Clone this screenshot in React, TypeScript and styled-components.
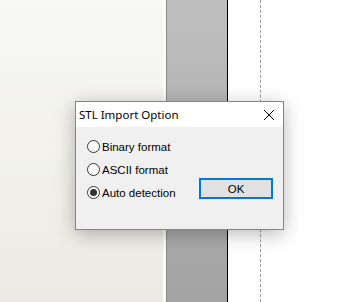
import React, { FC, useState } from "react";
import styled, { createGlobalStyle } from "styled-components";

const GlobalStyle = createGlobalStyle`
  html, body {
    margin: 0;
    padding: 0;
    overflow: hidden;
  }
  body {
    font-family: "Liberation Sans", Arial, sans-serif;
  }
`;

const options = ["Binary format", "ASCII format", "Auto detection"];

const App: FC = () => {
  const [selected, setSelected] = useState(2);

  return (
    <Screen>
      <GlobalStyle />
      <SidePanel />
      <Splitter />
      <GrayPanel />
      <Canvas>
        <GuideLine />
      </Canvas>

      <Dialog>
        <TitleBar>
          <Title>STL Import Option</Title>
          <CloseButton aria-label="Close">
            <svg width="12" height="12" viewBox="0 0 12 12">
              <path d="M1 1 L11 11 M11 1 L1 11" stroke="#000" strokeWidth="1" />
            </svg>
          </CloseButton>
        </TitleBar>
        <Body>
          <RadioList>
            {options.map((label, i) => (
              <RadioRow key={label} onClick={() => setSelected(i)}>
                <RadioCircle checked={selected === i} />
                <RadioLabel>{label}</RadioLabel>
              </RadioRow>
            ))}
          </RadioList>
          <OkButton>OK</OkButton>
        </Body>
      </Dialog>
    </Screen>
  );
};

const Screen = styled.div`
  position: relative;
  display: flex;
  width: 354px;
  height: 302px;
  background: #fff;
`;

const SidePanel = styled.div`
  width: 163px;
  background: linear-gradient(to bottom, #f8f8f5, #ebeae2);
`;

const Splitter = styled.div`
  width: 3px;
  background: #fbfbfb;
  border-right: 1px solid #8a8a8a;
`;

const GrayPanel = styled.div`
  width: 60px;
  background: linear-gradient(to bottom, #bfbfbf, #a3a3a3);
  border-right: 1px solid #000;
`;

const Canvas = styled.div`
  flex: 1;
  display: flex;
  padding-left: 32px;
  background: #fff;
`;

const GuideLine = styled.div`
  width: 0;
  border-left: 1px dashed #9a9a9a;
`;

const Dialog = styled.div`
  position: absolute;
  left: 75px;
  top: 101px;
  width: 207px;
  height: 127px;
  display: flex;
  flex-direction: column;
  border: 1px solid #858585;
  background: #f0f0f0;
  box-shadow: 0 4px 18px rgba(0, 0, 0, 0.28);
`;

const TitleBar = styled.div`
  height: 25px;
  display: flex;
  align-items: center;
  justify-content: space-between;
  padding-left: 3px;
  background: #fff;
`;

const Title = styled.span`
  font-family: "Noto Sans", "Open Sans", sans-serif;
  font-size: 11.5px;
  color: #000;
`;

const CloseButton = styled.div`
  width: 28px;
  height: 25px;
  display: flex;
  align-items: center;
  justify-content: center;
`;

const Body = styled.div`
  flex: 1;
  display: flex;
  align-items: flex-start;
  padding: 8px 10px 0 11px;
`;

const RadioList = styled.div`
  display: flex;
  flex-direction: column;
`;

const RadioRow = styled.label`
  height: 23px;
  display: flex;
  align-items: center;
  gap: 2px;
  cursor: default;
`;

const RadioCircle = styled.span<{ checked: boolean }>`
  width: 11px;
  height: 11px;
  border: 1px solid #333;
  border-radius: 50%;
  background: #fff;
  display: flex;
  align-items: center;
  justify-content: center;

  &::after {
    content: "";
    width: 7px;
    height: 7px;
    border-radius: 50%;
    background: #333;
    display: ${(p) => (p.checked ? "block" : "none")};
  }
`;

const RadioLabel = styled.span`
  font-size: 11.5px;
  color: #000;
`;

const OkButton = styled.button`
  margin: 43px 0 0 auto;
  width: 74px;
  height: 21px;
  padding: 0;
  border: 2px solid #0078d7;
  background: #e1e1e1;
  font-family: "Liberation Sans", Arial, sans-serif;
  font-size: 11.5px;
  color: #000;
`;

export default App;
